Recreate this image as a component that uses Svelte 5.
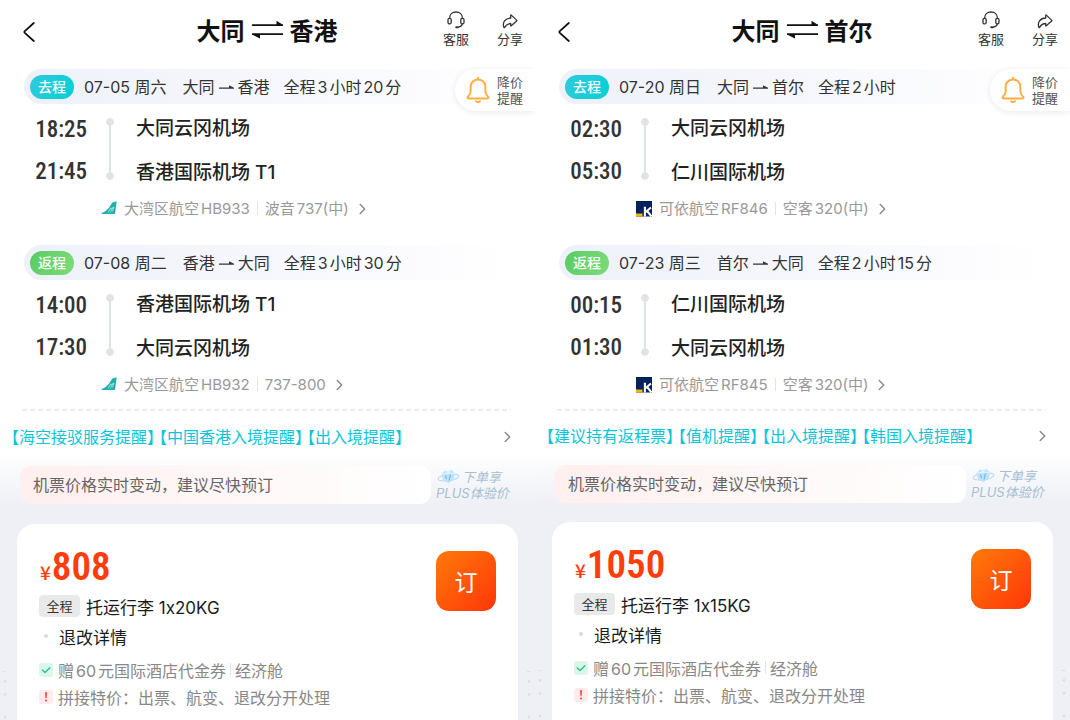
<script>
  const trips = [
    {
      from: '大同',
      to: '香港',
      price: '808',
      baggage: '托运行李 1x20KG',
      notices: ['海空接驳服务提醒', '中国香港入境提醒', '出入境提醒'],
      legs: [
        { tag: '去程', kind: 'out', date: '07-05 周六', from: '大同', to: '香港', total: ['全程', '3', '小时', '20', '分'],
          dep: '18:25', arr: '21:45', depPort: '大同云冈机场', arrPort: '香港国际机场 T1', airline: '大湾区航空', no: 'HB933', maker: '波音', model: '737(中)', logo: 'bay' },
        { tag: '返程', kind: 'return', date: '07-08 周二', from: '香港', to: '大同', total: ['全程', '3', '小时', '30', '分'],
          dep: '14:00', arr: '17:30', depPort: '香港国际机场 T1', arrPort: '大同云冈机场', airline: '大湾区航空', no: 'HB932', maker: '', model: '737-800', logo: 'bay' }
      ]
    },
    {
      from: '大同',
      to: '首尔',
      price: '1050',
      baggage: '托运行李 1x15KG',
      notices: ['建议持有返程票', '值机提醒', '出入境提醒', '韩国入境提醒'],
      legs: [
        { tag: '去程', kind: 'out', date: '07-20 周日', from: '大同', to: '首尔', total: ['全程', '2', '小时'],
          dep: '02:30', arr: '05:30', depPort: '大同云冈机场', arrPort: '仁川国际机场', airline: '可依航空', no: 'RF846', maker: '空客', model: '320(中)', logo: 'k' },
        { tag: '返程', kind: 'return', date: '07-23 周三', from: '首尔', to: '大同', total: ['全程', '2', '小时', '15', '分'],
          dep: '00:15', arr: '01:30', depPort: '仁川国际机场', arrPort: '大同云冈机场', airline: '可依航空', no: 'RF845', maker: '空客', model: '320(中)', logo: 'k' }
      ]
    }
  ];
</script>

{#snippet chevron()}
  <svg class="chevron" width="7" height="12" viewBox="0 0 7 12" fill="none" stroke="currentColor" stroke-width="1.4" stroke-linecap="round" stroke-linejoin="round"><path d="M1.200 1.500L5.700 6l-4.500 4.500" /></svg>
{/snippet}

{#snippet logo(kind)}
  {#if kind === 'bay'}
    <svg width="16" height="16" viewBox="0 0 16 16">
      <path d="M.3 12.200C5 10.800 7.600 7.600 10 3.500 11 1.800 12.600.7 15.700.600L14 13H1.500Q.6 13 .3 12.200Z" fill="#20b1ab" />
      <path d="M7.200 11.600L9.800 6.600M9.300 11.600l3-5.700M11.500 10.500l1.600-4.700M8.800 8.300l4.200-1.600" stroke="#b7e8e5" stroke-width=".7" fill="none" />
    </svg>
  {:else}
    <svg width="16" height="16" viewBox="0 0 16 16">
      <path fill="#04215a" d="M0 0h16v15.500H0z" />
      <path fill="#f6b21b" d="M0 12.500h6.500v3H0z" />
      <path d="M8.900 5.800v9.700M15 6.500l-5.600 4.700M11 9.800l4.400 5.500" stroke="#fff" stroke-width="2.100" fill="none" />
    </svg>
  {/if}
{/snippet}

{#snippet margins(side)}
  <svg class="dots {side}" width="4" height="50" viewBox="0 0 4 50" fill="#dddfe4" aria-hidden="true"><path d="M0 1h3v1H0z" /><circle cx="2" cy="11.500" r="1.400" /><circle cx="2" cy="24.500" r="1.400" /><circle cx="2" cy="47" r="1.400" /></svg>
{/snippet}

<main class="page">
  {#each trips as trip}
    <section class="panel">
      <header class="top">
        <button class="back" aria-label="返回">
          <svg width="12" height="20" viewBox="0 0 12 20" fill="none" stroke="#111" stroke-width="1.800" stroke-linecap="round" stroke-linejoin="round"><path d="M10.800 1L1.800 9.200q-.8.800 0 1.600L10.800 19" /></svg>
        </button>
        <h1>
          <span>{trip.from}</span>
          <svg width="31" height="19" viewBox="0 0 31 19" fill="#111"><path d="M0 4.300h24.500V.8L30 4.300h1V6H0zM31 15H8v3.600L1 15H0v-1.700h31z" /></svg>
          <span>{trip.to}</span>
        </h1>
        <nav class="actions">
          <button>
            <svg width="18" height="18" viewBox="0 0 18 18" fill="none" stroke="#333" stroke-width="1.300" stroke-linecap="round"><path d="M2.600 7.400V7C2.600 3.500 5.200 1 9 1s6.400 2.500 6.400 6v.4" /><rect x="1" y="7.300" width="3.200" height="5.600" rx="1.500" /><rect x="13.800" y="7.300" width="3.200" height="5.600" rx="1.500" /><path d="M15.300 13.200q-.6 2.300-3.800 2.900" /><path d="M9.200 16.300h1.600" stroke-width="2" /></svg>
            <span>客服</span>
          </button>
          <button class="share">
            <svg width="16" height="15" viewBox="0 0 16 15" fill="none" stroke="#333" stroke-width="1.300" stroke-linejoin="round"><path d="M8.700 1.400q0-.7.600-.3l5.300 5q.5.500 0 1l-5.300 4.700q-.6.400-.6-.3V9.500C5.300 9.500 4 11 2.600 13.300q-.5.600-.8-.1C.3 8.600 3 4.100 8.700 4Z" /></svg>
            <span>分享</span>
          </button>
        </nav>
      </header>

      <button class="alert">
        <svg width="26" height="28" viewBox="0 0 26 28" fill="none" stroke="#ffae42" stroke-width="2" stroke-linecap="round" stroke-linejoin="round"><path d="M13 1.800v1.700M13 3.500c-4.700 0-7.400 3.300-7.400 7.700v4.500c0 2.400-1 3.300-2.600 4.900-.8.800-.6 1.800.5 1.800h19c1.100 0 1.300-1 .5-1.800-1.600-1.600-2.600-2.500-2.600-4.900v-4.500c0-4.400-2.700-7.700-7.400-7.700ZM11 25.300q2 1.700 4 0" /></svg>
        <span>降价<br />提醒</span>
      </button>

      {#each trip.legs as leg}
        <article class="leg">
          <div class="bar">
            <span class="pill {leg.kind}">{leg.tag}</span>
            <span class="date">{leg.date}</span>
            <span class="route">{leg.from}<svg width="15" height="6" viewBox="0 0 15 6" fill="#333"><path d="M0 3.600h10V1.300l5 2.400v1H0z" /></svg>{leg.to}</span>
            <span class="pair">{#each leg.total as part}<span>{part}</span>{/each}</span>
          </div>
          <div class="stops">
            <div class="times"><time>{leg.dep}</time><time>{leg.arr}</time></div>
            <div class="track"></div>
            <div class="ports"><span>{leg.depPort}</span><span>{leg.arrPort}</span></div>
          </div>
          <a class="flight" href="#flight">
            {@render logo(leg.logo)}
            <span class="pair"><span>{leg.airline}</span><span>{leg.no}</span></span>
            <i></i>
            <span class="pair">{#if leg.maker}<span>{leg.maker}</span>{/if}<span>{leg.model}</span></span>
            {@render chevron()}
          </a>
        </article>
      {/each}

      <svg class="divider" height="2" aria-hidden="true"><line x1="0" y1="1" x2="100%" y2="1" stroke="#d9dbdc" stroke-width="1" stroke-dasharray="5 3" /></svg>

      <a class="notices" href="#notices">
        <span class="list">{#each trip.notices as n}<span>【{n}】</span>{/each}</span>
        {@render chevron()}
      </a>

      <div class="lower">
        <div class="promo">
          <p class="hint">机票价格实时变动，建议尽快预订</p>
          <p class="plus">
            <span><svg width="23" height="15" viewBox="0 0 23 15"><ellipse cx="11.500" cy="8.500" rx="10.500" ry="3.200" fill="none" stroke="#b8dbf1" stroke-width="1" transform="rotate(-8 11.500 8.500)" /><path d="M4.500 5L8 1.200 11 2.500l3-2 4 3.800-1 6.200-5.500 3.800L6 11.500z" fill="#bfe3fa" /><path d="M8 1.200l3 3 3-3.700M4.500 5L11 4.200l7 .1" stroke="#e8f6ff" fill="none" /><path d="M8.500 6.500l1 3.500M13.500 5.500l-1.500 6" stroke="#78b9e6" stroke-width="1.200" /></svg>下单享</span>
            <span>PLUS体验价</span>
          </p>
        </div>
        {@render margins('left')}
        {@render margins('right')}
        <div class="card">
          <div class="offer">
            <p class="price"><small>¥</small><span>{trip.price}</span></p>
            <p class="line"><span class="tag">全程</span>{trip.baggage}</p>
            <p class="line"><span class="bullet"></span>退改详情</p>
            <p class="note"><svg width="14" height="14" viewBox="0 0 14 14"><rect width="14" height="14" rx="3" fill="#daf7ea" /><path d="M3.300 6.900l2.700 2.600 4.800-4.700" fill="none" stroke="#25c98b" stroke-width="1.400" stroke-linecap="round" stroke-linejoin="round" /></svg><span class="pair"><span>赠</span><span>60</span><span>元国际酒店代金券</span></span><i></i><span>经济舱</span></p>
            <p class="note"><svg width="14" height="14" viewBox="0 0 14 14"><rect width="14" height="14" rx="3" fill="#ffebeb" /><path d="M5.900 2.300h2.200l-.5 6H6.400z" fill="#ff4b50" /><circle cx="7" cy="10.500" r="1.100" fill="#ff4b50" /></svg><span>拼接特价：出票、航变、退改分开处理</span></p>
          </div>
          <button class="book">订</button>
        </div>
      </div>
    </section>
  {/each}
</main>

<style>
  :global(body) { margin: 0; background: #fff; }
  .page {
    display: grid;
    grid-template-columns: repeat(2, minmax(0, 1fr));
    min-height: 100vh;
    font-family: Inter, "Noto Sans CJK SC", sans-serif;
    color: #222;
    white-space: nowrap;
  }
  h1, p { margin: 0; }
  svg { display: block; flex: none; }
  button { padding: 0; border: 0; background: none; font: inherit; color: inherit; cursor: pointer; }
  a { color: inherit; text-decoration: none; }

  .panel { --trim: 0px; position: relative; display: flex; flex-direction: column; overflow: hidden; }
  .panel:last-child { --trim: 1px; }

  .top { display: grid; grid-template-columns: 1fr auto 1fr; height: 69px; box-sizing: border-box; padding: 0 12px 0 11px; }
  .back { justify-self: start; align-self: start; margin: 22px 0 0 12px; }
  h1 { display: flex; align-items: center; gap: 7px; height: 58px; font-size: 24px; font-weight: 700; color: #111; }
  .actions { display: flex; justify-self: end; align-items: flex-start; gap: 28px; padding-top: 11px; }
  .actions button { display: flex; flex-direction: column; align-items: center; font-size: 13px; line-height: 20px; color: #333; }
  .actions .share { padding-top: 3px; }

  .alert {
    position: absolute; top: 69px; right: 0;
    display: flex; align-items: center; gap: 6px;
    height: 42px; padding: 0 12px 0 10px;
    border-radius: 21px 0 0 21px; background: #fff;
    box-shadow: 0 1px 6px rgba(0, 0, 0, .09);
    font-size: 13px; line-height: 16px; color: #555;
  }

  .leg { height: 176px; }
  .bar {
    display: flex; align-items: center; height: 35px; margin: 0 24px;
    padding-left: 6px; border-radius: 18px 0 0 18px;
    background: linear-gradient(90deg, #eef1f9, #f7f8fd 55%, #fff);
    font-size: 16px; line-height: 24px; color: #333;
  }
  .pill { width: 44px; border-radius: 12px; margin-right: 10px; text-align: center; font-size: 14px; font-weight: 500; color: #fff; }
  .out { background: linear-gradient(110deg, #2fcbdc, #06cfd6); }
  .return { background: linear-gradient(110deg, #5acb63, #7cdc7a); }
  .date { margin-right: 16px; }
  .route { display: flex; align-items: center; gap: 4px; margin-right: 14px; }
  .pair { display: flex; align-items: baseline; gap: 2px; }

  .stops { display: flex; margin-top: 2px; height: 88px; }
  .times { display: flex; flex-direction: column; align-items: flex-end; width: 87px; font-family: "Roboto Condensed", "Liberation Sans Narrow", Roboto, sans-serif; font-size: 23px; font-weight: 500; line-height: 42px; color: #333; padding-top: 3px; box-sizing: border-box; }
  .track {
    width: 8px; height: 62px; margin: 12px 22px 0 19px;
    background:
      radial-gradient(circle at center, #dfe3e4 3.500px, transparent 4px) top / 8px 8px no-repeat,
      radial-gradient(circle at center, #dfe3e4 3.500px, transparent 4px) bottom / 8px 8px no-repeat,
      linear-gradient(#dfe3e4, #dfe3e4) center / 2px 56px no-repeat;
  }
  .ports { display: flex; flex-direction: column; padding-top: 1px; font-size: 19px; font-weight: 500; line-height: 44px; color: #222; }

  .flight { display: flex; align-items: center; height: 29px; padding-left: 101px; font-size: 15px; line-height: 20px; color: #999; }
  .flight .pair:nth-of-type(1) { margin-left: 7px; }
  i { width: 1px; height: 13px; margin: 0 7px; background: #e2e4e5; }
  .chevron { color: #888; }
  .flight .chevron { margin-left: 10px; }

  .divider { width: auto; margin: -12px 24px 0 22px; }
  .notices { display: flex; align-items: center; justify-content: space-between; height: 33px; margin-top: calc(9px - var(--trim)); padding: 0 24px 0 11px; font-size: 16px; line-height: 24px; color: #0cc5d8; }
  .list { display: flex; gap: 4px; font-feature-settings: "halt"; }

  .lower { position: relative; flex: 1; display: flex; flex-direction: column; padding: 12px 17px 0; background: linear-gradient(#fff, #eef0f5 52px); }
  .promo { display: flex; align-items: center; height: 39px; padding: 0 6px 0 3px; }
  .hint { flex: 1; padding-left: 13px; border-radius: 11px; background: linear-gradient(90deg, #ffefef, #fff); font-size: 16px; line-height: 38px; color: #666; }
  .plus { display: flex; flex: none; flex-direction: column; width: 76px; margin-left: 5px; font-size: 13px; font-style: italic; line-height: 16px; color: #a5bfd5; }
  .plus span:first-child { display: flex; align-items: center; gap: 2px; padding-left: 1px; }
  .dots { position: absolute; top: 217px; }
  .left { left: 3px; }
  .right { right: 4px; }

  .card { flex: 1; display: flex; align-items: flex-start; justify-content: space-between; margin-top: calc(20px - var(--trim)); padding: 20px 22px 8px; border-radius: 18px 18px 0 0; background: #fff; }
  .offer { display: flex; flex-direction: column; }
  .price { display: flex; align-items: baseline; gap: 1px; height: 47px; padding-left: 1px; font-family: "Roboto Condensed", "Liberation Sans Narrow", Roboto, sans-serif; font-size: 39px; font-weight: 600; line-height: 47px; color: #ff3d0b; }
  .price small { font-family: "Noto Sans CJK SC", sans-serif; font-size: 19px; font-weight: 500; line-height: 20px; }
  .line { display: flex; align-items: center; height: 30px; font-size: 17px; color: #1b1b1b; }
  .tag { width: 41px; margin-right: 6px; border-radius: 4px; background: #e8eaea; text-align: center; font-size: 13px; line-height: 22px; color: #333; }
  .bullet { width: 4px; height: 4px; margin: 0 11px 0 5px; border-radius: 50%; background: #d8dadb; }
  .note { display: flex; align-items: center; height: 27px; font-size: 16px; color: #888; }
  .line + .note { margin-top: 5px; }
  .note svg { margin-right: 5px; }
  .note i { margin: 0 4px; }
  .book { width: 60px; height: 60px; margin-top: 7px; border-radius: 13px; background: linear-gradient(135deg, #ff7a0a, #ff3608); font-size: 23px; color: #fff; }
</style>
